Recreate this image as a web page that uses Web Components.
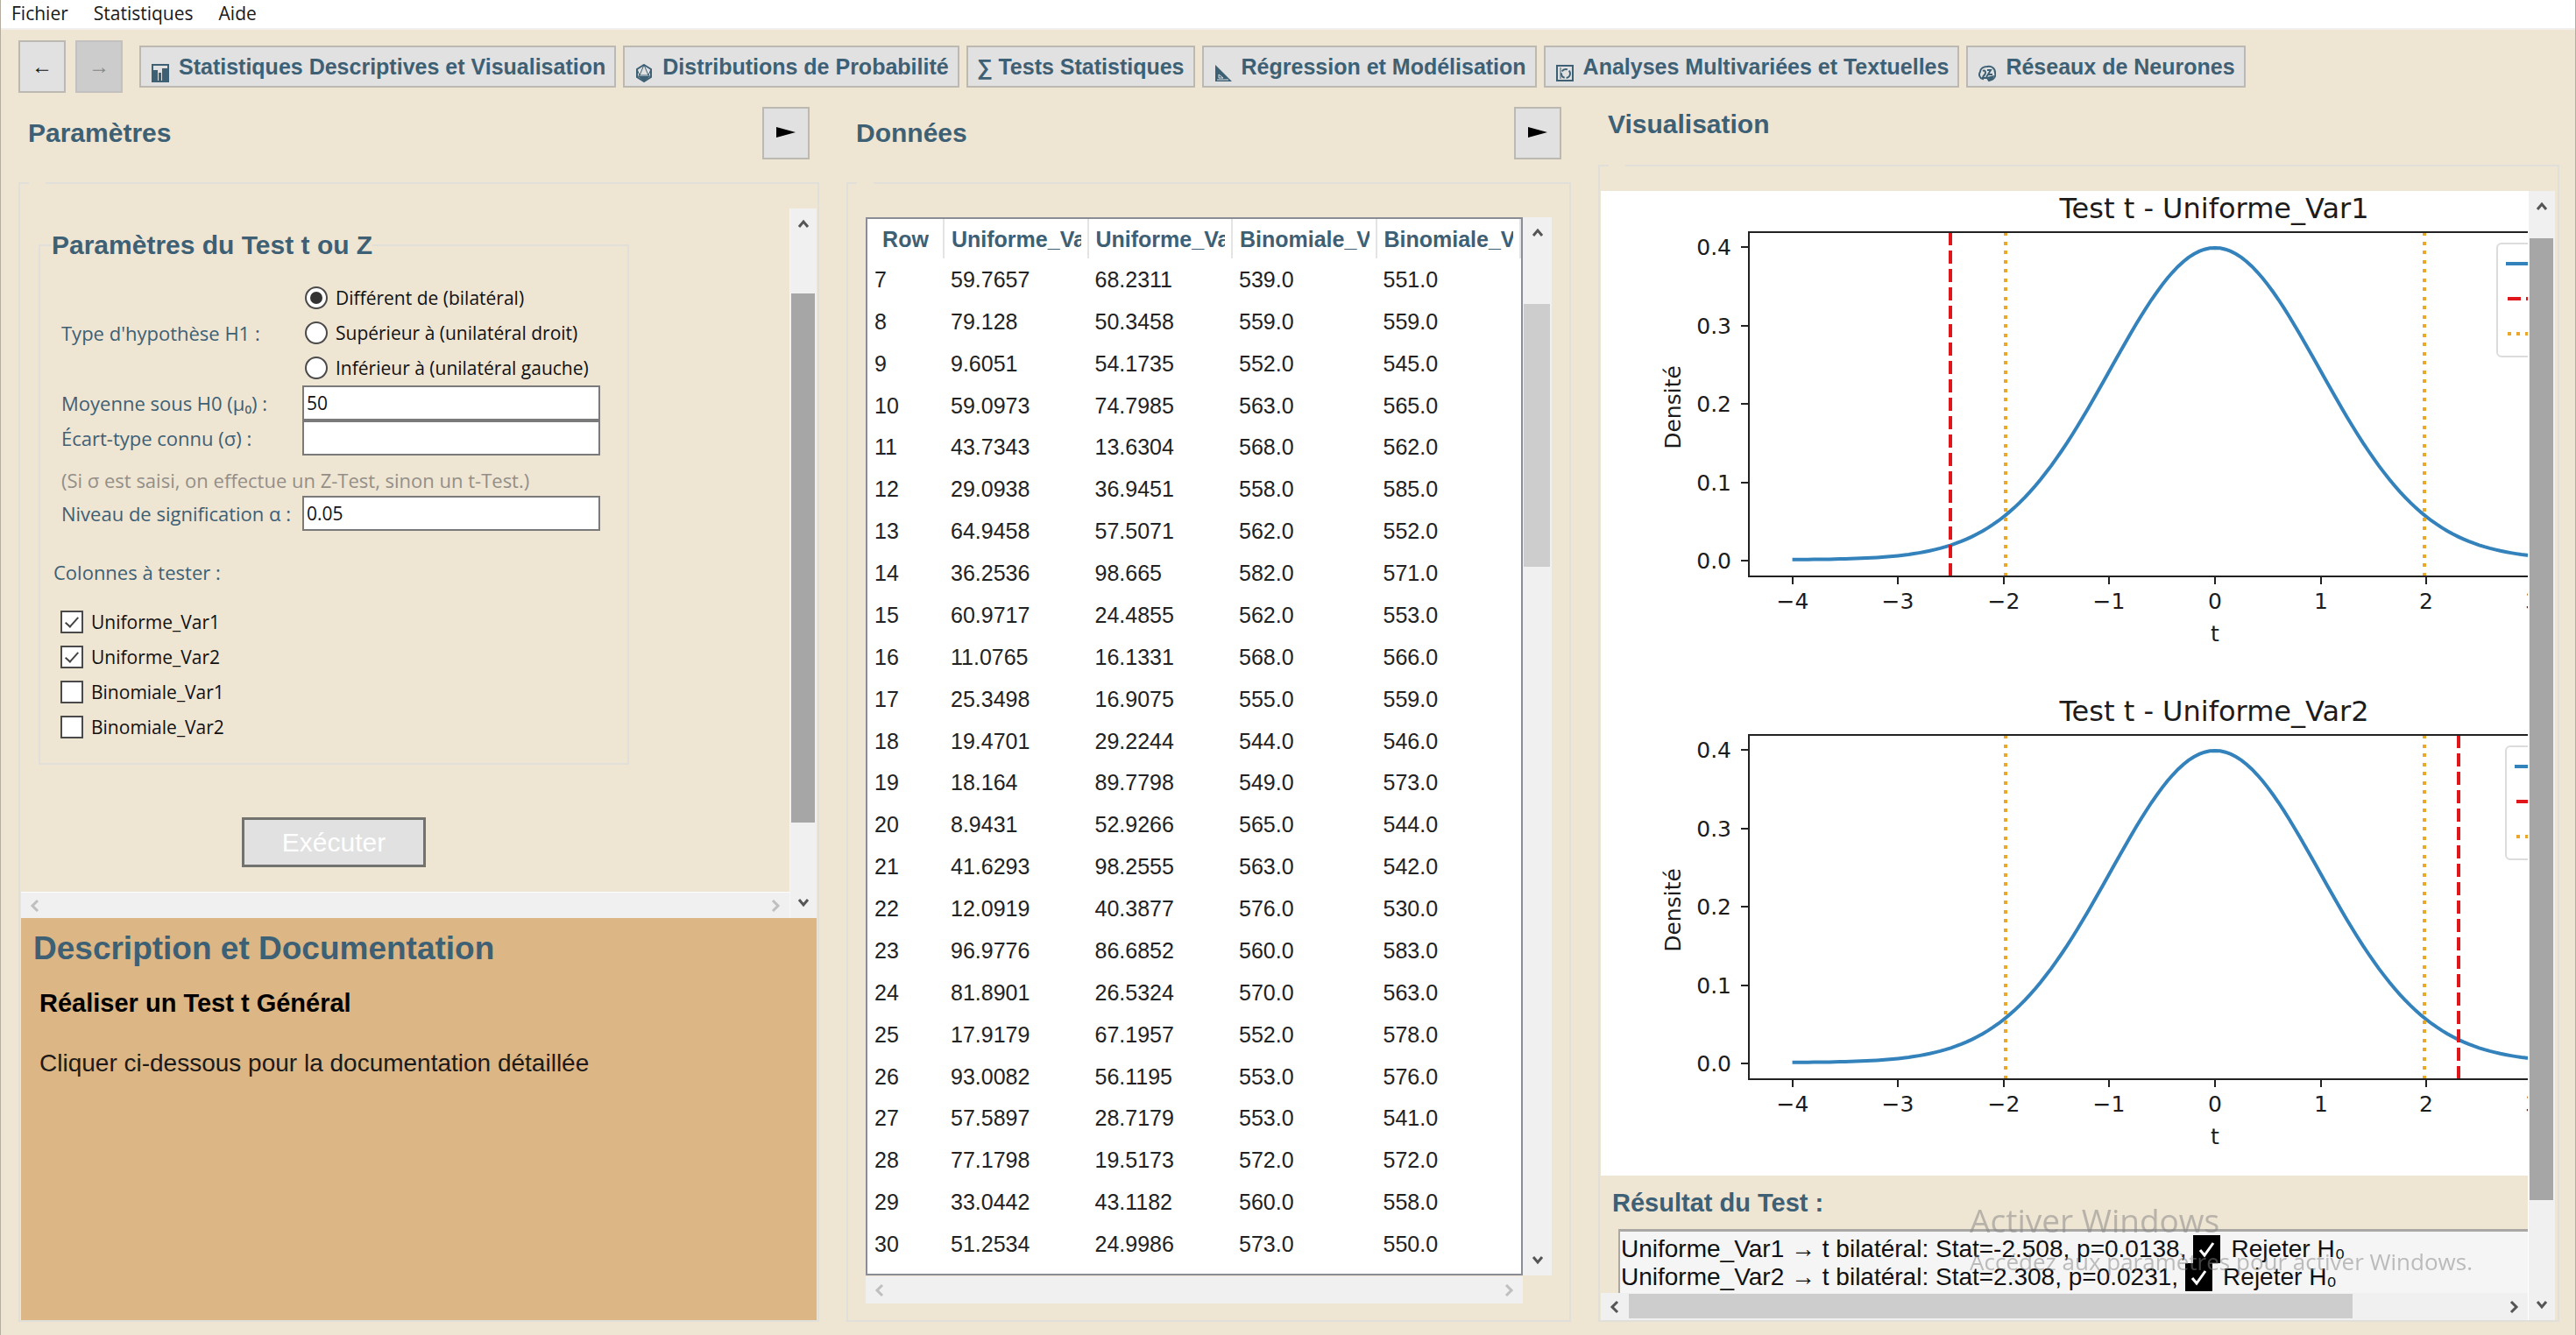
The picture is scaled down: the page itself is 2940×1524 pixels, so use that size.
<!DOCTYPE html>
<html lang="fr">
<head>
<meta charset="utf-8">
<title>Statistiques</title>
<style>
	:root {
		--bg: #efe5d3;
		--ink: #3d6075;
		--face: #e1e1e1;
		--edge: #bcb9b3;
		--line: #e1dfda;
		--arial: "Liberation Sans", Arial, sans-serif;
		--segoe: "Open Sans", "Noto Sans", sans-serif;
	}

	body {
		margin: 0;
		background: var(--bg);
		font-family: var(--arial);
	}
</style>
</head>
<body>
<stat-app></stat-app>

<script>
class MenuBar extends HTMLElement {
	connectedCallback() {
		const shadow = this.attachShadow({ mode: "open" });
		const items = ["Fichier", "Statistiques", "Aide"];
		shadow.innerHTML = `
			<nav>${items.map((item) => `<button>${item}</button>`).join("")}</nav>

			<style>
				:host {
					display: block;
					background: #fff;
					border-bottom: 2px solid #f1f0ee;
				}

				nav {
					display: flex;
					gap: 29px;
					padding: 0 12px 2px;
				}

				button {
					border: 0;
					padding: 0;
					background: none;
					font: 21px/30px var(--segoe);
					color: #1a1a1a;
				}
			</style>
		`;
	}
}
customElements.define("menu-bar", MenuBar);

const ICONS = {
	chart: '<path d="M1 1h18v19H1z" fill="none" stroke="currentColor" stroke-width="2"/><path d="M2 7h5v12H2zM8 10h3v9H8zM12 5h7v14h-7z" fill="currentColor"/>',
	die: '<path d="M10 1l8 5v9l-8 5-8-5V6z" fill="none" stroke="currentColor" stroke-width="2"/><path d="M10 1L5 13h10zM2 6l3 7-3 2M18 6l-3 7 3 2" fill="none" stroke="currentColor" stroke-width="1"/><path d="M3 14h14l-7 6z" fill="currentColor"/>',
	ruler: '<path d="M1 1v19h19z" fill="currentColor"/><path d="M5 12v4h5z" fill="currentColor" stroke="#e1e1e1" stroke-width="1"/><path d="M3 18h13" stroke="#e1e1e1" stroke-width="1"/>',
	dial: '<path d="M1 2h18v17H1z" fill="none" stroke="currentColor" stroke-width="2"/><path d="M5 4v13" stroke="currentColor" stroke-width="1"/><circle cx="11" cy="11" r="5" fill="none" stroke="currentColor" stroke-width="2" stroke-dasharray="7 2"/>',
	brain: '<path d="M5 17C1 16 0 12 2 9c0-4 4-6 8-6 5-1 9 2 9 7 1 4-1 7-4 8l-3 1-2-3H5z" fill="none" stroke="currentColor" stroke-width="2"/><path d="M5 8c2-1 3 0 3 2s-2 3-3 5M10 7h4l-3 5h5M9 15l2-3" fill="none" stroke="currentColor" stroke-width="2"/><path d="M10 15l8-2c0 3-2 5-5 6z" fill="currentColor"/>',
};

class TabButton extends HTMLElement {
	connectedCallback() {
		const shadow = this.attachShadow({ mode: "open" });
		const icon = ICONS[this.getAttribute("icon")];
		shadow.innerHTML = `
			<button>
				${icon ? `<svg viewBox="0 0 20 21" aria-hidden="true">${icon}</svg>` : ""}
				<slot></slot>
			</button>

			<style>
				:host {
					display: block;
				}

				button {
					display: flex;
					align-items: center;
					gap: 11px;
					height: 48px;
					padding: 0 10px;
					border: 2px solid var(--edge);
					background: var(--face);
					font: bold 25px/28px var(--arial);
					color: var(--ink);
					white-space: nowrap;
				}

				svg {
					width: 20px;
					height: 21px;
					padding-top: 16px;
					padding-left: 2px;
					margin-top: -2px;
				}
			</style>
		`;
	}
}
customElements.define("tab-button", TabButton);

class ToolBar extends HTMLElement {
	connectedCallback() {
		const shadow = this.attachShadow({ mode: "open" });
		shadow.innerHTML = `
			<button aria-label="Précédent">←</button>
			<button aria-label="Suivant" disabled>→</button>
			<div>
				<tab-button icon="chart">Statistiques Descriptives et Visualisation</tab-button>
				<tab-button icon="die">Distributions de Probabilité</tab-button>
				<tab-button>∑ Tests Statistiques</tab-button>
				<tab-button icon="ruler">Régression et Modélisation</tab-button>
				<tab-button icon="dial">Analyses Multivariées et Textuelles</tab-button>
				<tab-button icon="brain">Réseaux de Neurones</tab-button>
			</div>

			<style>
				:host {
					display: flex;
					align-items: center;
					gap: 11px;
					padding: 12px 20px 16px;
				}

				div {
					display: flex;
					gap: 8px;
					margin-left: 8px;
				}

				button {
					width: 54px;
					height: 60px;
					padding: 0;
					border: 2px solid var(--edge);
					background: var(--face);
					font: 24px/24px var(--arial);
					color: #111;
				}

				button:disabled {
					background: #cccccc;
					border-color: #c2c1bf;
					color: #888;
				}
			</style>
		`;
	}
}
customElements.define("tool-bar", ToolBar);

class AppPanel extends HTMLElement {
	connectedCallback() {
		const shadow = this.attachShadow({ mode: "open" });
		const fold = '<button aria-label="Replier"><svg viewBox="0 0 22 12"><path d="M0 0l22 6-22 6z"/></svg></button>';
		shadow.innerHTML = `
			<header>
				<h2>${this.getAttribute("heading")}</h2>
				${this.hasAttribute("fold") ? fold : ""}
			</header>
			<fieldset>
				<legend></legend>
				<slot></slot>
			</fieldset>

			<style>
				:host {
					display: flex;
					flex-direction: column;
					gap: 26px;
					min-width: 0;
					min-height: 0;
				}

				header {
					display: flex;
					align-items: center;
					justify-content: space-between;
					padding: 0 11px;
				}

				h2 {
					margin: 0;
					font: bold 30px/40px var(--arial);
					color: var(--ink);
				}

				button {
					width: 54px;
					height: 60px;
					padding: 0;
					border: 2px solid var(--edge);
					background: var(--face);
				}

				svg {
					width: 22px;
					height: 12px;
				}

				fieldset {
					display: flex;
					flex: 1;
					min-width: 0;
					min-height: 0;
					margin: 0;
					padding: 0;
					border: 2px solid var(--line);
				}

				legend {
					width: 19px;
					height: 2px;
					margin-left: 10px;
					padding: 0;
				}

				::slotted(*) {
					flex: 1;
					min-width: 0;
				}
			</style>
		`;
	}
}
customElements.define("app-panel", AppPanel);

// parts="before thumb after" gives the relative lengths of the track
class ScrollTrack extends HTMLElement {
	connectedCallback() {
		const shadow = this.attachShadow({ mode: "open" });
		const vertical = this.hasAttribute("vertical");
		const [before, thumb, after] = (this.getAttribute("parts") || "1 0 0").split(" ");
		const arrow = (d) => `<svg viewBox="0 0 20 20" aria-hidden="true"><path d="${d}"/></svg>`;
		shadow.innerHTML = `
			${arrow(vertical ? "M5 13l5-6 5 6" : "M13 4l-6 6 6 6")}
			<i style="flex-grow: ${before}"></i>
			<b style="flex-grow: ${thumb}"></b>
			<i style="flex-grow: ${after}"></i>
			${arrow(vertical ? "M5 7l5 6 5-6" : "M7 4l6 6-6 6")}

			<style>
				:host {
					display: flex;
					flex-direction: ${vertical ? "column" : "row"};
					align-items: center;
					background: #f0f0f0;
					color: #555;
				}

				:host([idle]) {
					color: #bfbfbf;
				}

				:host([dark]) {
					--thumb: #a6a6a6;
				}

				svg {
					flex: none;
					width: 20px;
					height: 20px;
					padding: ${vertical ? "8px 0" : "0 6px"};
				}

				path {
					fill: none;
					stroke: currentColor;
					stroke-width: 3;
				}

				i,
				b {
					flex-basis: 0;
				}

				b {
					align-self: stretch;
					margin: ${vertical ? "0 2px 0 1px" : "1px 0 2px"};
					background: var(--thumb, #cdcdcd);
				}
			</style>
		`;
	}
}
customElements.define("scroll-track", ScrollTrack);

class TestForm extends HTMLElement {
	connectedCallback() {
		const shadow = this.attachShadow({ mode: "open" });
		const columns = ["Uniforme_Var1", "Uniforme_Var2", "Binomiale_Var1", "Binomiale_Var2"];
		shadow.innerHTML = `
			<form>
				<fieldset>
					<legend>Paramètres du Test t ou Z</legend>
					<div class="grid">
						<span class="type" id="type">Type d'hypothèse H1 :</span>
						<div role="radiogroup" aria-labelledby="type">
							<label><input type="radio" name="h1" checked>Différent de (bilatéral)</label>
							<label><input type="radio" name="h1">Supérieur à (unilatéral droit)</label>
							<label><input type="radio" name="h1">Inférieur à (unilatéral gauche)</label>
						</div>
						<label for="mu">Moyenne sous H0 (μ₀) :</label>
						<input type="text" id="mu" value="50">
						<label for="sigma">Écart-type connu (σ) :</label>
						<input type="text" id="sigma">
						<p class="hint">(Si σ est saisi, on effectue un Z-Test, sinon un t-Test.)</p>
						<label for="alpha">Niveau de signification α :</label>
						<input type="text" id="alpha" value="0.05">
					</div>
					<p class="columns">Colonnes à tester :</p>
					<div class="checks">
						${columns
							.map((name, i) => `<label><input type="checkbox" ${i < 2 ? "checked" : ""}>${name}</label>`)
							.join("")}
					</div>
				</fieldset>
				<button type="button">Exécuter</button>
			</form>

			<style>
				:host {
					display: block;
					overflow: hidden;
				}

				form {
					padding: 24px 20px;
					font: 22px/40px var(--segoe);
					color: var(--ink);
				}

				fieldset {
					box-sizing: border-box;
					width: 674px;
					margin: 0;
					padding: 22px 13px 21px;
					border: 2px solid var(--line);
				}

				legend {
					padding: 0;
					font: bold 30px/36px var(--arial);
				}

				p {
					margin: 0;
				}

				.grid {
					display: grid;
					grid-template-columns: 275px 340px;
					align-items: center;
					margin-left: 11px;
				}

				[role="radiogroup"] label,
				.checks label {
					display: flex;
					align-items: center;
					font-size: 21px;
					color: #111;
					white-space: nowrap;
				}

				.hint {
					grid-column: span 2;
					height: 36px;
					padding-top: 10px;
					line-height: 36px;
					color: #938f88;
				}

				.columns {
					margin: 27px 0 17px 2px;
				}

				.checks {
					margin-left: 10px;
				}

				input[type="text"] {
					box-sizing: border-box;
					width: 100%;
					height: 40px;
					padding: 0 3px;
					border: 2px solid #7a7a7a;
					background: #fff;
					font: 21px/32px var(--segoe);
					color: #111;
				}

				input[type="radio"],
				input[type="checkbox"] {
					appearance: none;
					display: grid;
					place-items: center;
					box-sizing: border-box;
					width: 26px;
					height: 26px;
					margin: 0 9px 0 0;
					border: 2px solid #4a4a4a;
					background: #fff;
				}

				input[type="radio"] {
					margin: 0 9px 0 3px;
					border-radius: 50%;
				}

				input[type="radio"]:checked::before {
					content: "";
					width: 14px;
					height: 14px;
					border-radius: 50%;
					background: #333;
				}

				input[type="checkbox"]:checked::before {
					content: "";
					width: 6px;
					height: 13px;
					margin-bottom: 4px;
					border: solid #444;
					border-width: 0 2px 2px 0;
					transform: rotate(42deg);
				}

				button {
					width: 210px;
					height: 57px;
					margin: 60px 0 0 232px;
					padding: 0;
					border: 3px solid #72736f;
					background: var(--face);
					font: 30px/36px var(--arial);
					color: #fff;
				}
			</style>
		`;
	}
}
customElements.define("test-form", TestForm);

class ParamsView extends HTMLElement {
	connectedCallback() {
		const shadow = this.attachShadow({ mode: "open" });
		shadow.innerHTML = `
			<section class="area">
				<test-form></test-form>
				<scroll-track vertical dark parts="61 605 73"></scroll-track>
				<scroll-track idle></scroll-track>
			</section>
			<section class="doc">
				<h3>Description et Documentation</h3>
				<h4>Réaliser un Test t Général</h4>
				<p>Cliquer ci-dessous pour la documentation détaillée</p>
			</section>

			<style>
				:host {
					display: grid;
					grid-template-rows: 810fr 459fr;
					padding: 28px 1px 0;
				}

				.area {
					display: grid;
					grid-template: minmax(0, 1fr) 30px / minmax(0, 1fr) 31px;
					min-height: 0;
				}

				[vertical] {
					grid-area: 1 / 2 / 3 / 3;
					border-left: 1px solid #faf6ee;
				}

				[idle] {
					border-top: 1px solid #fff;
				}

				.doc {
					padding: 13px 14px;
					background: #dcb684;
				}

				h3,
				h4,
				p {
					margin: 0;
				}

				h3 {
					font: bold 37px/44px var(--arial);
					color: var(--ink);
				}

				h4 {
					margin: 22px 0 33px 7px;
					font: bold 29px/36px var(--arial);
				}

				p {
					margin-left: 7px;
					font: 28px/36px var(--arial);
					color: #1c1a18;
				}
			</style>
		`;
	}
}
customElements.define("params-view", ParamsView);

const ROWS = [
	["59.7657", "68.2311", "539.0", "551.0"],
	["79.128", "50.3458", "559.0", "559.0"],
	["9.6051", "54.1735", "552.0", "545.0"],
	["59.0973", "74.7985", "563.0", "565.0"],
	["43.7343", "13.6304", "568.0", "562.0"],
	["29.0938", "36.9451", "558.0", "585.0"],
	["64.9458", "57.5071", "562.0", "552.0"],
	["36.2536", "98.665", "582.0", "571.0"],
	["60.9717", "24.4855", "562.0", "553.0"],
	["11.0765", "16.1331", "568.0", "566.0"],
	["25.3498", "16.9075", "555.0", "559.0"],
	["19.4701", "29.2244", "544.0", "546.0"],
	["18.164", "89.7798", "549.0", "573.0"],
	["8.9431", "52.9266", "565.0", "544.0"],
	["41.6293", "98.2555", "563.0", "542.0"],
	["12.0919", "40.3877", "576.0", "530.0"],
	["96.9776", "86.6852", "560.0", "583.0"],
	["81.8901", "26.5324", "570.0", "563.0"],
	["17.9179", "67.1957", "552.0", "578.0"],
	["93.0082", "56.1195", "553.0", "576.0"],
	["57.5897", "28.7179", "553.0", "541.0"],
	["77.1798", "19.5173", "572.0", "572.0"],
	["33.0442", "43.1182", "560.0", "558.0"],
	["51.2534", "24.9986", "573.0", "550.0"],
];

class DataTable extends HTMLElement {
	connectedCallback() {
		const shadow = this.attachShadow({ mode: "open" });
		const heads = ["Uniforme_Var1", "Uniforme_Var2", "Binomiale_Var1", "Binomiale_Var2"];
		shadow.innerHTML = `
			<div>
				<table>
					<thead>
						<tr><th>Row</th>${heads.map((h) => `<th><span>${h}</span></th>`).join("")}</tr>
					</thead>
					<tbody>
						${ROWS.map((row, i) => `<tr><td>${i + 7}</td>${row.map((v) => `<td>${v}</td>`).join("")}</tr>`).join("")}
					</tbody>
				</table>
			</div>
			<scroll-track vertical parts="63 301 775"></scroll-track>
			<scroll-track idle></scroll-track>

			<style>
				:host {
					display: grid;
					grid-template: minmax(0, 1fr) 31px / minmax(0, 1fr) 33px;
					row-gap: 1px;
					padding: 38px 20px 19px;
				}

				div {
					box-sizing: border-box;
					min-height: 0;
					padding-bottom: 10px;
					overflow: hidden;
					border: 2px solid #8a8d95;
					background: #fff;
				}

				table {
					width: 100%;
					height: 100%;
					table-layout: fixed;
					border-collapse: collapse;
					font: 25px/30px var(--arial);
					color: #222;
				}

				th,
				td {
					padding: 0 0 0 8px;
					text-align: left;
				}

				th {
					height: 45px;
					padding-right: 7px;
					border-right: 2px solid #e4e4e4;
					color: var(--ink);
				}

				th:first-child {
					width: 71px;
					text-align: center;
				}

				span {
					display: block;
					overflow: hidden;
				}
			</style>
		`;
	}
}
customElements.define("data-table", DataTable);

// Student density with its observed statistic and critical values
class TestPlot extends HTMLElement {
	connectedCallback() {
		const shadow = this.attachShadow({ mode: "open" });
		const stat = Number(this.getAttribute("stat"));
		const legend = Number(this.getAttribute("legend"));
		const x = (t) => Math.round(701 + t * 1206 / 10);
		const y = (d) => 422 - d * 895;
		const curve = [];
		for (let t = -4; t <= 4.001; t += 0.05) {
			curve.push(`${(701 + t * 120.6).toFixed(1)},${(y(0.3979 * Math.pow(1 + t * t / 99, -50)) - 1).toFixed(1)}`);
		}
		const xticks = [-4, -3, -2, -1, 0, 1, 2, 3, 4];
		const yticks = [0, 1, 2, 3, 4];
		shadow.innerHTML = `
			<svg width="1280" height="550" viewBox="0 0 1280 550">
				<text class="title" x="700" y="31">Test t - ${this.getAttribute("column")}</text>
				<polyline points="${curve.join(" ")}" fill="none" stroke="#3482bb" stroke-width="4"/>
				<path d="M${x(stat)} 440V48" stroke="#e0161b" stroke-width="4" stroke-dasharray="15 6"/>
				<path d="M${x(-1.984)} 440V48M${x(1.984)} 440V48" stroke="#e9a72c" stroke-width="4" stroke-dasharray="4 7 4 6"/>
				<g fill="none" stroke="#222" stroke-width="2">
					<rect x="169" y="47" width="1064" height="393"/>
					${xticks.map((t) => `<path d="M${x(t)} 440v9"/>`).join("")}
					${yticks.map((d) => `<path d="M169 ${Math.round(y(d / 10))}h-9"/>`).join("")}
				</g>
				<g class="tick">
					${xticks.map((t) => `<text x="${x(t)}" y="477" text-anchor="middle">${t < 0 ? "−" + -t : t}</text>`).join("")}
					${yticks.map((d) => `<text x="149" y="${Math.round(y(d / 10)) + 9}" text-anchor="end">0.${d}</text>`).join("")}
					<text x="701" y="514" text-anchor="middle">t</text>
					<text transform="translate(91 247) rotate(-90)" text-anchor="middle">Densité</text>
				</g>
				<rect x="${legend}" y="60" width="${1222 - legend}" height="129" rx="5" fill="#fff" fill-opacity="0.8" stroke="#dcdcdc" stroke-width="2"/>
				<path d="M${legend + 10} 83h50" stroke="#3482bb" stroke-width="4"/>
				<path d="M${legend + 12} 123h50" stroke="#e0161b" stroke-width="4" stroke-dasharray="15 6"/>
				<path d="M${legend + 12} 163h50" stroke="#e9a72c" stroke-width="4" stroke-dasharray="4 6"/>
			</svg>

			<style>
				:host {
					display: block;
					overflow: hidden;
				}

				svg {
					display: block;
				}

				text {
					font-family: "DejaVu Sans", sans-serif;
					fill: #1c1c1c;
				}

				.title {
					font-size: 32px;
					text-anchor: middle;
				}

				.tick {
					font-size: 25px;
				}
			</style>
		`;
	}
}
customElements.define("test-plot", TestPlot);

class ResultsView extends HTMLElement {
	connectedCallback() {
		const shadow = this.attachShadow({ mode: "open" });
		const mark = '<svg viewBox="0 0 31 32" aria-label="✓"><path d="M0 0h31v32H0z"/><path d="M8 17l5 6L23 9" fill="none" stroke="#fff" stroke-width="3"/></svg>';
		shadow.innerHTML = `
			<section>
				<div class="plots">
					<test-plot column="Uniforme_Var1" stat="-2.508" legend="1023"></test-plot>
					<test-plot column="Uniforme_Var2" stat="2.308" legend="1033"></test-plot>
				</div>
				<h3>Résultat du Test :</h3>
				<output>
					<p>Uniforme_Var1 → t bilatéral: Stat=-2.508, p=0.0138,${mark}Rejeter H₀</p>
					<p>Uniforme_Var2 → t bilatéral: Stat=2.308, p=0.0231,${mark}Rejeter H₀</p>
				</output>
			</section>
			<scroll-track vertical dark parts="18 1097 101"></scroll-track>
			<scroll-track parts="0 827 168"></scroll-track>

			<style>
				:host {
					display: grid;
					grid-template: minmax(0, 1fr) 31px / minmax(0, 1fr) 31px;
					padding: 28px 3px 0 1px;
				}

				section {
					display: flex;
					flex-direction: column;
					min-height: 0;
					overflow: hidden;
				}

				.plots {
					display: flex;
					flex: none;
					flex-direction: column;
					gap: 24px;
					background: #fff;
				}

				h3 {
					margin: 13px 0 12px 13px;
					font: bold 29px/36px var(--arial);
					color: var(--ink);
				}

				output {
					display: block;
					flex: none;
					margin-left: 20px;
					padding: 4px 1px;
					border: solid #aaa8a5;
					border-width: 3px 0 0 2px;
					background: #f5f5f5;
				}

				p {
					margin: 0;
					font: 28px/32px var(--arial);
					color: #111;
					white-space: nowrap;
				}

				p svg {
					width: 31px;
					height: 32px;
					margin: 0 12px 0 8px;
					vertical-align: top;
				}

				[vertical] {
					grid-area: 1 / 2 / 3 / 3;
					border-left: 1px solid #fff;
				}
			</style>
		`;
	}
}
customElements.define("results-view", ResultsView);

class ActivationNotice extends HTMLElement {
	connectedCallback() {
		const shadow = this.attachShadow({ mode: "open" });
		shadow.innerHTML = `
			<strong>Activer Windows</strong>
			<span>Accédez aux paramètres pour activer Windows.</span>

			<style>
				:host {
					position: fixed;
					right: 118px;
					bottom: 61px;
					display: grid;
					font-family: var(--segoe);
					color: rgba(130, 130, 130, 0.5);
					pointer-events: none;
				}

				strong {
					font: 37px/48px var(--segoe);
				}

				span {
					font: 26px/46px var(--segoe);
				}
			</style>
		`;
	}
}
customElements.define("activation-notice", ActivationNotice);

class StatApp extends HTMLElement {
	connectedCallback() {
		const shadow = this.attachShadow({ mode: "open" });
		shadow.innerHTML = `
			<menu-bar></menu-bar>
			<tool-bar></tool-bar>
			<main>
				<app-panel heading="Paramètres" fold><params-view></params-view></app-panel>
				<app-panel heading="Données" fold><data-table></data-table></app-panel>
				<app-panel heading="Visualisation"><results-view></results-view></app-panel>
			</main>
			<activation-notice></activation-notice>

			<style>
				:host {
					display: grid;
					grid-template-rows: auto auto minmax(0, 1fr);
					box-sizing: border-box;
					height: 100vh;
					border: solid #b3ac9f;
					border-width: 0 1px;
					background: var(--bg);
				}

				main {
					display: grid;
					grid-template-columns: 914fr 827fr 1097fr;
					gap: 31px;
					padding: 0 18px 15px 20px;
				}
			</style>
		`;
	}
}
customElements.define("stat-app", StatApp);
</script>
</body>
</html>
